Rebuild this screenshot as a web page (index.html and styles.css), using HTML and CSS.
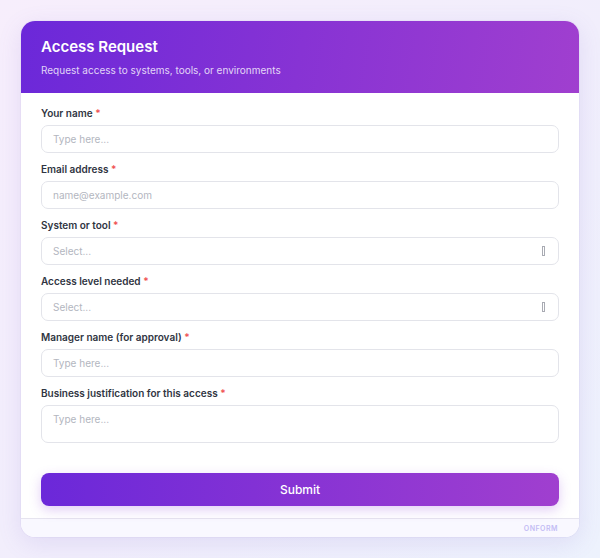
FILE: index.html
```html
<!DOCTYPE html>
<html>
<head>
<meta charset="utf-8">
<link rel="stylesheet" href="styles.css">
</head>
<body>
<div class="card">
  <div class="header">
    <h1 class="title">Access Request</h1>
    <p class="subtitle">Request access to systems, tools, or environments</p>
  </div>
  <form class="body">
    <div class="field">
      <label class="label">Your name <span class="req">*</span></label>
      <div class="input"><span class="ph">Type here...</span></div>
    </div>
    <div class="field">
      <label class="label">Email address <span class="req">*</span></label>
      <div class="input"><span class="ph">name@example.com</span></div>
    </div>
    <div class="field">
      <label class="label">System or tool <span class="req">*</span></label>
      <div class="input select"><span class="ph">Select...</span><span class="arrow"></span></div>
    </div>
    <div class="field">
      <label class="label">Access level needed <span class="req">*</span></label>
      <div class="input select"><span class="ph">Select...</span><span class="arrow"></span></div>
    </div>
    <div class="field">
      <label class="label">Manager name (for approval) <span class="req">*</span></label>
      <div class="input"><span class="ph">Type here...</span></div>
    </div>
    <div class="field">
      <label class="label">Business justification for this access <span class="req">*</span></label>
      <div class="input textarea"><span class="ph">Type here...</span></div>
    </div>
    <button type="button" class="submit">Submit</button>
  </form>
  <div class="footer">ONFORM</div>
</div>
</body>
</html>
```
FILE: styles.css
```css
* { box-sizing: border-box; }
html, body { margin: 0; }
body {
  width: 600px;
  height: 558px;
  padding: 21px;
  font-family: Inter, "Noto Sans", sans-serif;
  background: linear-gradient(135deg, #f7eefc 0%, #f1eefc 55%, #edf2fd 100%);
}
.card {
  width: 558px;
  background: #fff;
  border-radius: 14px;
  overflow: hidden;
  box-shadow: 0 6px 24px rgba(120, 90, 200, 0.14), 0 0 0 1px rgba(140, 120, 200, 0.06);
}
.header {
  padding: 16px 20px;
  background: linear-gradient(100deg, #6b28d9 0%, #8733d4 50%, #a03fcf 100%);
  color: #fff;
}
.title {
  margin: 0;
  font-size: 15px;
  line-height: 20px;
  font-weight: 600;
}
.subtitle {
  margin: 6px 0 0;
  font-size: 10px;
  line-height: 14px;
  color: rgba(255, 255, 255, 0.8);
}
.body {
  margin: 0;
  padding: 14px 20px 12px;
  display: flex;
  flex-direction: column;
}
.field {
  display: flex;
  flex-direction: column;
  gap: 6px;
  margin-bottom: 10px;
}
.label {
  font-size: 10px;
  line-height: 12px;
  font-weight: 600;
  color: #303542;
}
.req { color: #f05252; }
.input {
  height: 28px;
  border: 1.5px solid #e3e4ea;
  border-radius: 7px;
  padding: 0 11px;
  display: flex;
  align-items: center;
  justify-content: space-between;
}
.textarea {
  height: 38px;
  align-items: flex-start;
  padding-top: 7px;
}
.ph {
  font-size: 10px;
  color: #b3b6c0;
}
.arrow {
  width: 3px;
  height: 10px;
  border: 1px solid #a9abb3;
  margin-right: 2px;
}
.submit {
  margin-top: 20px;
  height: 33px;
  border: 0;
  border-radius: 8px;
  font-family: inherit;
  font-size: 12px;
  font-weight: 500;
  color: #fff;
  background: linear-gradient(90deg, #6b28d9 0%, #8733d4 50%, #a03fcf 100%);
  box-shadow: 0 4px 12px rgba(140, 60, 220, 0.25);
}
.footer {
  border-top: 1px solid #e6e4ef;
  background: #f9f8ff;
  height: 19px;
  padding: 0 21px;
  display: flex;
  align-items: center;
  justify-content: flex-end;
  font-size: 7px;
  font-weight: 600;
  letter-spacing: 0.5px;
  color: #c4bdf5;
}
```
